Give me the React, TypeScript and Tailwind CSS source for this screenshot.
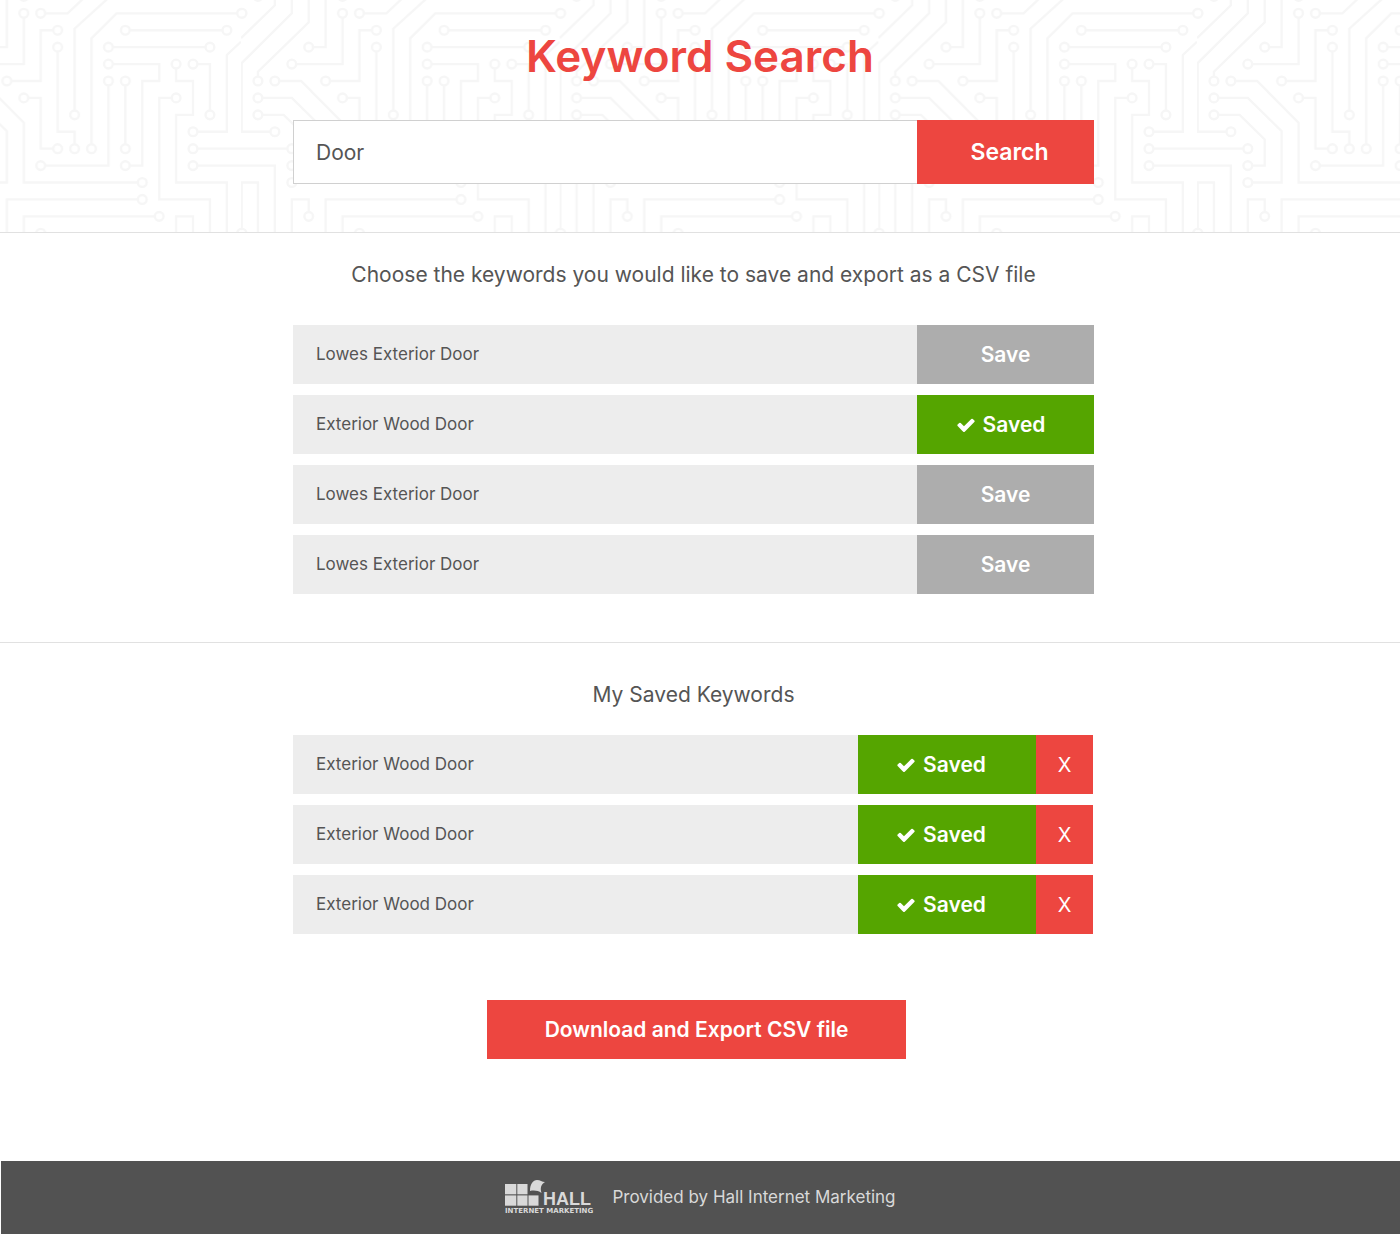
import { useState } from "react";

type Point = [number, number];
type Trace = { points: Point[]; start?: boolean; end?: boolean };

/* Board traces in grid units; `start` / `end` put a solder pad on that end. */
const traces: Trace[] = [
  { points: [[10, 9], [10, 2.48], [11.48, 1], [18.87, 1]], start: true, end: true },
  { points: [[9, 7], [9, 1.91], [11.1, 0]], start: true },
  { points: [[7, 1], [8.59, 1], [9.65, 0]], start: true },
  { points: [[6, 1], [6, 4], [3, 4]], start: true, end: true },
  { points: [[4, 3], [5, 3], [5, 0]], start: true },
  { points: [[8, 2], [7, 2], [7, 5], [5, 5]], start: true, end: true },
  { points: [[8, 3], [8, 8], [9, 8], [9, 9]], start: true, end: true },
  { points: [[6, 6], [7, 6], [7, 9], [8, 9]], start: true, end: true },
  { points: [[1, 5], [1, 4.45], [4, 1.53], [4, 0]], start: true },
  { points: [[3, 0], [3, 1], [0.04, 3.94], [0.04, 8], [2, 8]], end: true },
  { points: [[2, 0], [2, 0.53], [0, 2.46]] },
  { points: [[18.83, 2.68], [18, 3.46], [18, 8], [16, 8]], end: true },
  { points: [[2, 5], [3.55, 5], [6, 7.46], [6, 11], [13, 11]], start: true, end: true },
  { points: [[1, 6], [3, 6], [5, 7.97], [5, 11], [3, 11]], start: true, end: true },
  { points: [[1, 7], [2.52, 7], [4, 8.45], [4, 10], [3, 10]], start: true, end: true },
  { points: [[16, 9], [18.84, 9]], start: true },
  { points: [[0, 9], [3, 9]], end: true },
  { points: [[16, 10], [18.84, 10]], start: true },
  { points: [[0, 10], [2, 10], [2, 14.2]] },
  { points: [[0.04, 14.2], [0.04, 11], [1, 11], [1, 14.2]] },
  { points: [[3, 14.2], [3, 12], [4, 12], [4, 13]], end: true },
  { points: [[5, 14.2], [5, 12], [13, 12]], end: true },
  { points: [[6, 14.2], [6, 13], [14, 13]], end: true },
  { points: [[11, 3], [17, 3]], start: true, end: true },
  { points: [[12, 2], [18, 2]], start: true, end: true },
  { points: [[11, 4], [14, 4], [14, 5], [13, 5], [13, 10], [12, 10]], start: true, end: true },
  { points: [[11, 5], [11, 10], [7, 10]], start: true, end: true },
  { points: [[12, 5], [12, 9]], start: true, end: true },
  { points: [[15, 4], [15, 5], [16, 5], [16, 7], [15, 7], [15, 11], [18, 11], [18, 14.2]], start: true },
  { points: [[16, 4], [17, 4], [17, 7]], start: true, end: true },
  { points: [[15, 6], [14, 6], [14, 12], [17, 12], [17, 14.2]], start: true },
  { points: [[15, 14.2], [15, 13], [16, 13], [16, 14.2]] },
];

const loosePads: Point[] = [[0.06, 1], [1, 0], [6, 0], [7, 14], [0.06, 14], [18.87, 14]];

function CircuitBackground() {
  const pads = [
    ...loosePads,
    ...traces.flatMap((t) => [
      ...(t.start ? [t.points[0]] : []),
      ...(t.end ? [t.points[t.points.length - 1]] : []),
    ]),
  ];
  return (
    <svg aria-hidden="true" className="absolute inset-0 h-full w-full">
      <defs>
        <pattern id="circuit" x="-77.67" y="0" width="318.67" height="318" patternUnits="userSpaceOnUse">
          <g transform="translate(0 -3.6) scale(16.92)" fill="none" stroke="#f6f6f6" strokeWidth="0.14">
            {traces.map((t, i) => (
              <polyline key={i} points={t.points.map((p) => p.join(",")).join(" ")} />
            ))}
            {pads.map(([x, y], i) => (
              <circle key={i} cx={x} cy={y} r="0.26" fill="#ffffff" />
            ))}
          </g>
        </pattern>
      </defs>
      <rect width="100%" height="100%" fill="url(#circuit)" />
    </svg>
  );
}

function CheckIcon() {
  return (
    <svg aria-hidden="true" viewBox="0 0 1792 1792" className="size-5 shrink-0 fill-current">
      <path d="M1671 566q0 40-28 68l-724 724-136 136q-28 28-68 28t-68-28l-136-136-362-362q-28-28-28-68t28-68l136-136q28-28 68-28t68 28l294 295 656-657q28-28 68-28t68 28l136 136q28 28 28 68z" />
    </svg>
  );
}

function HallLogo() {
  return (
    <svg role="img" aria-label="Hall Internet Marketing" viewBox="0 0 91 35" className="h-[35px] w-[91px] shrink-0 fill-[#d9d9d9]">
      <rect x="0" y="4" width="11.3" height="10.3" />
      <rect x="12.3" y="4" width="10.2" height="10.3" />
      <rect x="0" y="15.4" width="11.3" height="10.3" />
      <rect x="12.3" y="15.4" width="10.2" height="10.3" />
      <rect x="23.5" y="15.4" width="10" height="10.3" />
      <path d="M25 11C25 4 28 0 32 0c3.2 0 5 2 8 2-4 2.500-5 6-3.500 11C33 10.500 29 10 25 11z" />
      <text x="38" y="25" className="font-['Liberation_Sans',sans-serif] text-[18px] font-bold">HALL</text>
      <text x="0" y="33" className="font-['DejaVu_Sans',sans-serif] text-[7px] font-bold">INTERNET MARKETING</text>
    </svg>
  );
}

const actionClass = "flex shrink-0 items-center justify-center text-[21px] font-semibold text-white";

function ResultRow({ keyword, saved, onToggle }: { keyword: string; saved: boolean; onToggle: () => void }) {
  return (
    <li className="flex h-[59px] bg-[#ededed]">
      <span className="flex flex-1 items-center px-[23px] text-[17px]">{keyword}</span>
      <button
        type="button"
        aria-pressed={saved}
        onClick={onToggle}
        className={saved ? `${actionClass} w-[177px] gap-[7px] bg-[#55a500] pr-2.5` : `${actionClass} w-[177px] bg-[#adadad]`}
      >
        {saved && <CheckIcon />}
        {saved ? "Saved" : "Save"}
      </button>
    </li>
  );
}

function SavedRow({ keyword, onRemove }: { keyword: string; onRemove: () => void }) {
  return (
    <li className="flex h-[59px] bg-[#ededed]">
      <span className="flex flex-1 items-center px-[23px] text-[17px]">{keyword}</span>
      <button type="button" className={`${actionClass} w-[178px] gap-[7px] bg-[#55a500] pr-3`}>
        <CheckIcon />
        Saved
      </button>
      <button
        type="button"
        aria-label={`Remove ${keyword}`}
        onClick={onRemove}
        className="w-[57px] shrink-0 bg-[#ed4640] text-[20px] text-white"
      >
        X
      </button>
    </li>
  );
}

export default function App() {
  const [query, setQuery] = useState("Door");
  const [results, setResults] = useState([
    { keyword: "Lowes Exterior Door", saved: false },
    { keyword: "Exterior Wood Door", saved: true },
    { keyword: "Lowes Exterior Door", saved: false },
    { keyword: "Lowes Exterior Door", saved: false },
  ]);
  const [savedKeywords, setSavedKeywords] = useState(["Exterior Wood Door", "Exterior Wood Door", "Exterior Wood Door"]);

  const toggle = (index: number) =>
    setResults(results.map((r, i) => (i === index ? { ...r, saved: !r.saved } : r)));

  return (
    <div className="min-h-screen bg-white font-['Inter',sans-serif] text-[#555555]">
      <header className="relative border-b border-[#e1e1e1] pt-8 pb-12">
        <CircuitBackground />
        <div className="relative">
          <h1 className="mb-10 text-center text-[44px] leading-[48px] font-semibold text-[#ed4640]">Keyword Search</h1>
          <div className="pr-[13px]">
            <form className="mx-auto flex h-16 max-w-[801px]" onSubmit={(e) => e.preventDefault()}>
              <input
                type="text"
                aria-label="Keyword"
                value={query}
                onChange={(e) => setQuery(e.target.value)}
                className="min-w-0 flex-1 border border-r-0 border-[#d0d0d0] bg-white px-[22px] pt-0.5 text-[21px] outline-none"
              />
              <button type="submit" className="w-[177px] shrink-0 bg-[#ed4640] pl-2 text-[23px] font-semibold text-white">
                Search
              </button>
            </form>
          </div>
        </div>
      </header>

      <main>
        <section className="border-b border-[#e1e1e1] pt-[27px] pr-[13px] pb-12">
          <h2 className="mb-[35px] text-center text-[21px] leading-[30px]">
            Choose the keywords you would like to save and export as a CSV file
          </h2>
          <ul className="mx-auto flex max-w-[801px] flex-col gap-[11px]">
            {results.map((r, i) => (
              <ResultRow key={i} keyword={r.keyword} saved={r.saved} onToggle={() => toggle(i)} />
            ))}
          </ul>
        </section>

        <section className="pt-[37px] pr-[13px] pb-[102px]">
          <h2 className="mb-[25px] text-center text-[21px] leading-[30px]">My Saved Keywords</h2>
          <ul className="mx-auto flex max-w-[801px] flex-col gap-[11px] pr-px">
            {savedKeywords.map((keyword, i) => (
              <SavedRow
                key={i}
                keyword={keyword}
                onRemove={() => setSavedKeywords(savedKeywords.filter((_, n) => n !== i))}
              />
            ))}
          </ul>
          <div className="mt-[66px] flex justify-center pl-[6px]">
            <button type="button" className="h-[59px] w-[419px] max-w-full bg-[#ed4640] text-[21px] font-semibold text-white">
              Download and Export CSV file
            </button>
          </div>
        </section>
      </main>

      <footer className="ml-px flex h-[73px] items-center justify-center gap-4 bg-[#525252] text-[17px] text-[#d9d9d9]">
        <HallLogo />
        <p>Provided by Hall Internet Marketing</p>
      </footer>
    </div>
  );
}
